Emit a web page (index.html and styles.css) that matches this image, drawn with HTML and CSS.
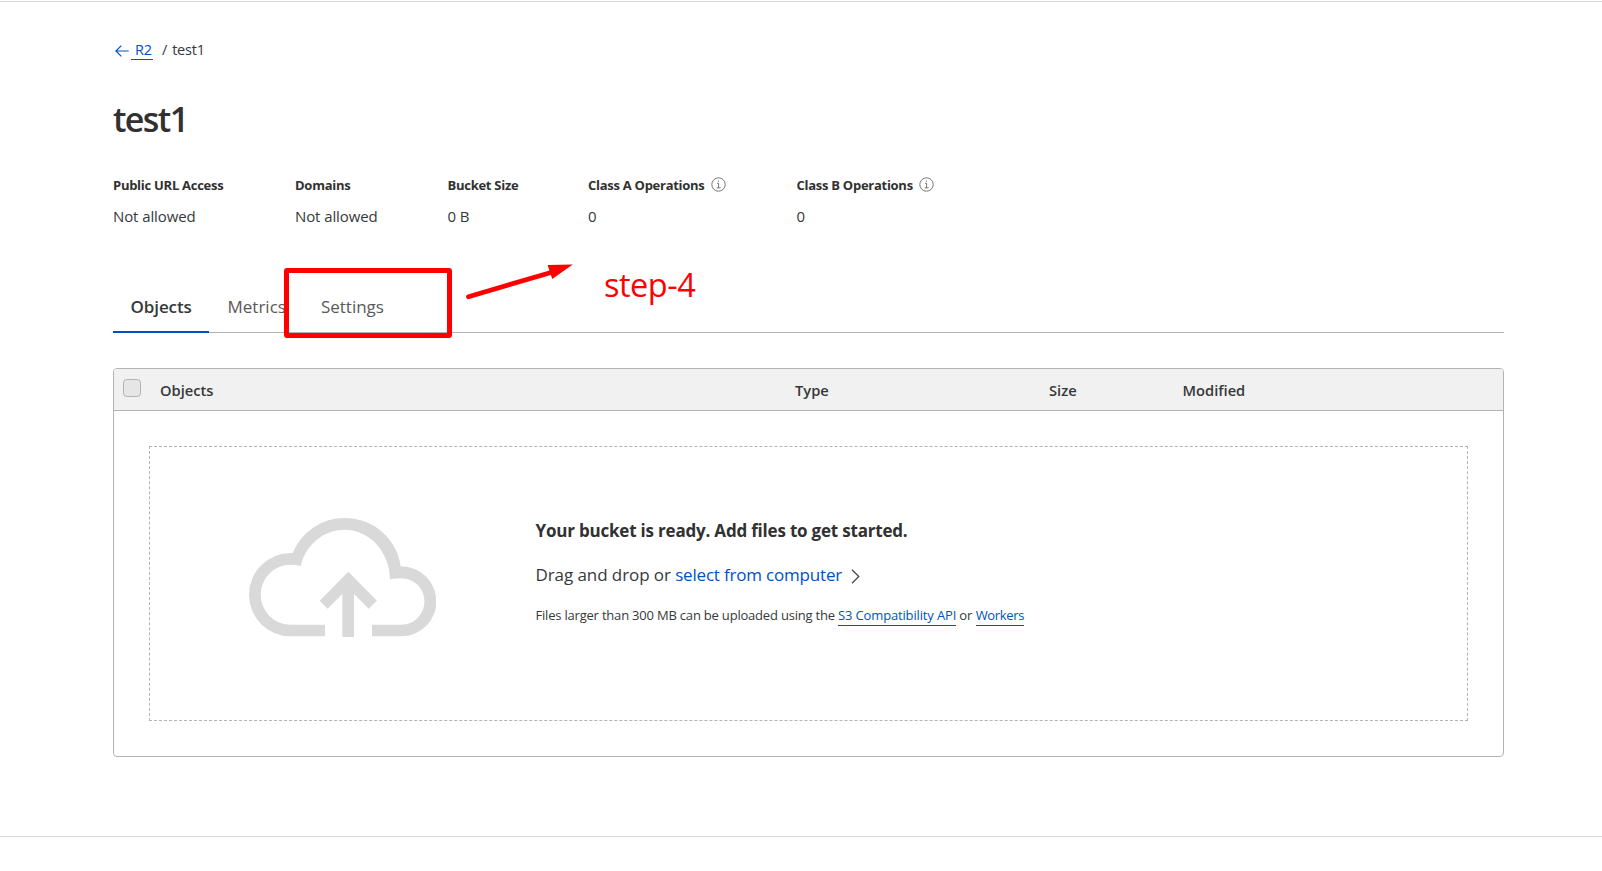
FILE: index.html
```html
<!DOCTYPE html>
<html lang="en">
<head>
<meta charset="utf-8">
<title>test1 | R2</title>
<link rel="stylesheet" href="styles.css">
</head>
<body>
<div class="topline"></div>
<main class="page">
  <nav class="crumbs">
    <svg class="back" width="14" height="12" viewBox="0 0 14 12"><path d="M6.3.6.9 6l5.4 5.4M.9 6h12.8"/></svg>
    <a class="crumb-link">R2</a>
    <span class="slash">/</span>
    <span class="here">test1</span>
  </nav>
  <h1 class="title">test1</h1>
  <dl class="stats">
    <div><dt>Public URL Access</dt><dd>Not allowed</dd></div>
    <div><dt>Domains</dt><dd>Not allowed</dd></div>
    <div><dt>Bucket Size</dt><dd>0 B</dd></div>
    <div><dt>Class A Operations<svg class="info" width="15" height="15" viewBox="0 0 15 15"><circle cx="7.5" cy="7.5" r="6.7"/><path d="M6 6.3h1.6v4.6M5.6 10.9h4M7.5 3.5v1.3"/></svg></dt><dd>0</dd></div>
    <div><dt>Class B Operations<svg class="info" width="15" height="15" viewBox="0 0 15 15"><circle cx="7.5" cy="7.5" r="6.7"/><path d="M6 6.3h1.6v4.6M5.6 10.9h4M7.5 3.5v1.3"/></svg></dt><dd>0</dd></div>
  </dl>
  <div class="tabs">
    <a class="tab active">Objects</a>
    <a class="tab">Metrics</a>
    <a class="tab">Settings</a>
  </div>
  <section class="panel">
    <div class="panel-head">
      <span class="checkbox"></span>
      <span>Objects</span><span>Type</span><span>Size</span><span>Modified</span>
    </div>
    <div class="dropzone">
      <svg class="cloud" width="187" height="119" viewBox="57 53 561 357">
        <path d="M285 408H182A125 125 0 0 1 182 158H188A168 168 0 0 1 345 53A168 168 0 0 1 512 198H514A105 105 0 0 1 514 408H426V373H514A69.500 69.500 0 0 0 514 234Q497 234 480 237C480 155 418 88 344 88C280 88 227 133 212 197Q197 193 182 193A90 90 0 0 0 182 373H285ZM355 214 441 301 416 325 372 281V410H337V281L293 325 269 301Z"/>
      </svg>
      <div class="copy">
        <p class="ready">Your bucket is ready. Add files to get started.</p>
        <p class="drag">Drag and drop or <a>select from computer</a><svg class="chev" width="9" height="15" viewBox="0 0 9 15"><path d="M1 .8 7.800 7.500 1 14.200"/></svg></p>
        <p class="note">Files larger than 300 MB can be uploaded using the <a>S3 Compatibility API</a> or <a>Workers</a></p>
      </div>
    </div>
  </section>
</main>
<footer class="footline"></footer>
<div class="mark-box"></div>
<svg class="mark-arrow" width="110" height="42" viewBox="465 260 110 42"><path class="shaft" d="M468.500 296.700 551 272.500"/><path class="head" d="M572.800 264.600 547.600 264.900 552.200 279Z"/></svg>
<div class="mark-text">step-4</div>
</body>
</html>
```
FILE: styles.css
```css
* { box-sizing: border-box; }
body {
  margin: 0;
  background: #fff;
  color: #36393a;
  font-family: "Open Sans", "Noto Sans", sans-serif;
  position: relative;
  overflow: hidden;
  white-space: nowrap;
}
h1, dl, dd, p { margin: 0; }
.topline { height: 2px; border-bottom: 1px solid #d9d9d9; }
.page { width: 1391px; margin: 0 0 0 113px; padding-top: 37px; }

.crumbs { display: flex; height: 21px; font-size: 14.5px; line-height: 22px; letter-spacing: -.2px; }
.back { margin: 6px 1px 0 1.5px; fill: none; stroke: #0051c3; stroke-width: 1.2; }
.crumb-link { padding-left: 4px; height: 21px; width: 22px; margin-left: 1.5px; border-bottom: 1px solid #0051c3; color: #0051c3; }
.slash { margin: 0 5px 0 9px; }

.title { margin-top: 39px; font-size: 34px; line-height: 40px; font-weight: 600; letter-spacing: -1.6px; color: #313131; }

.stats { display: grid; grid-template-columns: 182px 152.5px 140.500px 208.500px auto; margin-top: 36px; }
.stats dt { display: flex; font-size: 13px; line-height: 20px; font-weight: 700; letter-spacing: -.27px; color: #313131; }
.stats dd { margin-top: 11px; font-size: 15px; line-height: 20px; letter-spacing: -.1px; }
.info { margin: 2px 0 0 6px; fill: none; stroke: #797979; stroke-width: 1; }

.tabs { display: flex; margin-top: 54px; height: 53px; border-bottom: 1px solid #b3b3b3; font-size: 17px; line-height: 20px; color: #595959; }
.tab { padding: 17px 16.5px 0 18.5px; }
.active { width: 96px; height: 53px; padding-left: 17.5px; border-bottom: 2px solid #0051c3; color: #36393a; font-weight: 600; letter-spacing: -.1px; }

.panel { margin-top: 35px; border: 1px solid #b3b3b3; border-radius: 4px; }
.panel-head {
  display: grid; grid-template-columns: 46px 635px 254px 133.500px auto;
  height: 42px; padding-top: 1px; border-bottom: 1px solid #b3b3b3; border-radius: 3px 3px 0 0;
  background: #f1f1f1; font-size: 14.7px; line-height: 40px; font-weight: 600;
}
.checkbox { width: 18px; height: 18px; margin: 9px 0 0 9px; border: 1px solid #b3b3b3; border-radius: 4px; background: #e6e6e6; }
.dropzone { display: flex; gap: 99.5px; height: 275px; margin: 35px; padding: 71px 0 0 99px; border: 1px dashed #b3b3b3; }
.cloud { flex: none; fill: #d9d9d9; }
.copy { padding-top: 1px; }
.copy a { color: #0051c3; }
.ready { font-size: 17px; line-height: 24px; font-weight: 700; letter-spacing: -.2px; color: #313131; }
.drag { margin-top: 20px; font-size: 17px; line-height: 24px; letter-spacing: -.08px; }
.drag a { letter-spacing: -.19px; }
.chev { margin-left: 8.5px; vertical-align: -3px; fill: none; stroke: #4a4a4a; stroke-width: 1.3; }
.note { margin-top: 19px; font-size: 13px; line-height: 19px; letter-spacing: -.2px; }
.note a { display: inline-block; border-bottom: 1px solid #0051c3; letter-spacing: -.15px; }
.note a:last-child { letter-spacing: -.35px; margin-left: .5px; }

.footline { margin-top: 79px; height: 35px; border-top: 1px solid #d9d9d9; }

.mark-box { position: absolute; left: 284px; top: 268px; width: 168px; height: 70px; border: 5px solid #f00; border-radius: 3px; }
.mark-arrow { position: absolute; left: 465px; top: 260px; }
.shaft { stroke: #f00; stroke-width: 4.8; stroke-linecap: round; }
.head { fill: #f00; }
.mark-text { position: absolute; left: 604px; top: 265px; font-size: 32.5px; line-height: 40px; letter-spacing: -.5px; color: #f00; }
```
